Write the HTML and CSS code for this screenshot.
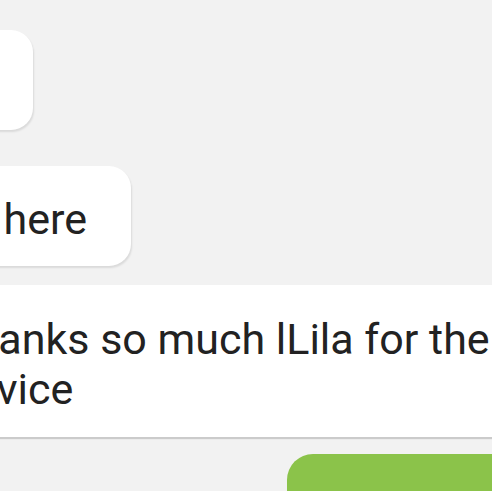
FILE: index.html
```html
<!DOCTYPE html>
<html lang="en">
<head>
    <meta charset="UTF-8">
    <meta name="viewport" content="width=device-width, initial-scale=1.0">
    <title>Chat</title>
    <link rel="stylesheet" href="styles.css">
</head>
<body>
    <div class="chat">
        <div class="row first">
            <div class="bubble in">
                <p>Hi!</p>
            </div>
        </div>

        <div class="row second">
            <div class="bubble in">
                <p>I'm here</p>
            </div>
        </div>

        <div class="row wide">
            <div class="bubble in flat">
                <p>Thanks so much lLila for the great advice</p>
            </div>
        </div>

        <div class="row out">
            <div class="bubble mine">
                <p>You're welcome</p>
            </div>
        </div>
    </div>
</body>
</html>
```

FILE: styles.css
```css
html, body {
    margin: 0;
    padding: 0;
    height: 491px;
    overflow: hidden;
}
body {
    font-family: Roboto, "Noto Sans", Arial, sans-serif;
    background-color: #f2f2f2;
    color: #222;
}
.chat {
    display: flex;
    flex-direction: column;
    padding-top: 30px;
}
.row {
    display: flex;
    justify-content: flex-end;
}
.row.first {
    width: 33px;
}
.row.second {
    width: 131px;
    margin-top: 36px;
}
.row.wide {
    justify-content: flex-start;
    margin-top: 19px;
}
.row.out {
    justify-content: flex-start;
    padding-left: 287px;
    margin-top: 17px;
}
.bubble {
    flex-shrink: 0;
    background-color: #fff;
    border-radius: 22px;
    box-shadow: 1px 2px 2px rgba(0, 0, 0, 0.1);
}
.bubble p {
    margin: 0;
    font-size: 43px;
    line-height: 50px;
    white-space: nowrap;
}
.first .bubble {
    height: 100px;
    padding: 0 120px 0 30px;
    box-sizing: border-box;
}
.first .bubble p {
    visibility: hidden;
}
.second .bubble {
    padding: 28px 44px 22px 30px;
}
.flat {
    margin-left: -81px;
    width: 710px;
    border-radius: 0;
    padding: 29px 30px 23px 30px;
    box-shadow: 0 2px 1px rgba(0, 0, 0, 0.16);
}
.flat p {
    white-space: normal;
}
.mine {
    width: 320px;
    height: 110px;
    background-color: #8bc34a;
    border-radius: 26px;
    padding: 30px;
    box-sizing: border-box;
    color: #fff;
}
```
